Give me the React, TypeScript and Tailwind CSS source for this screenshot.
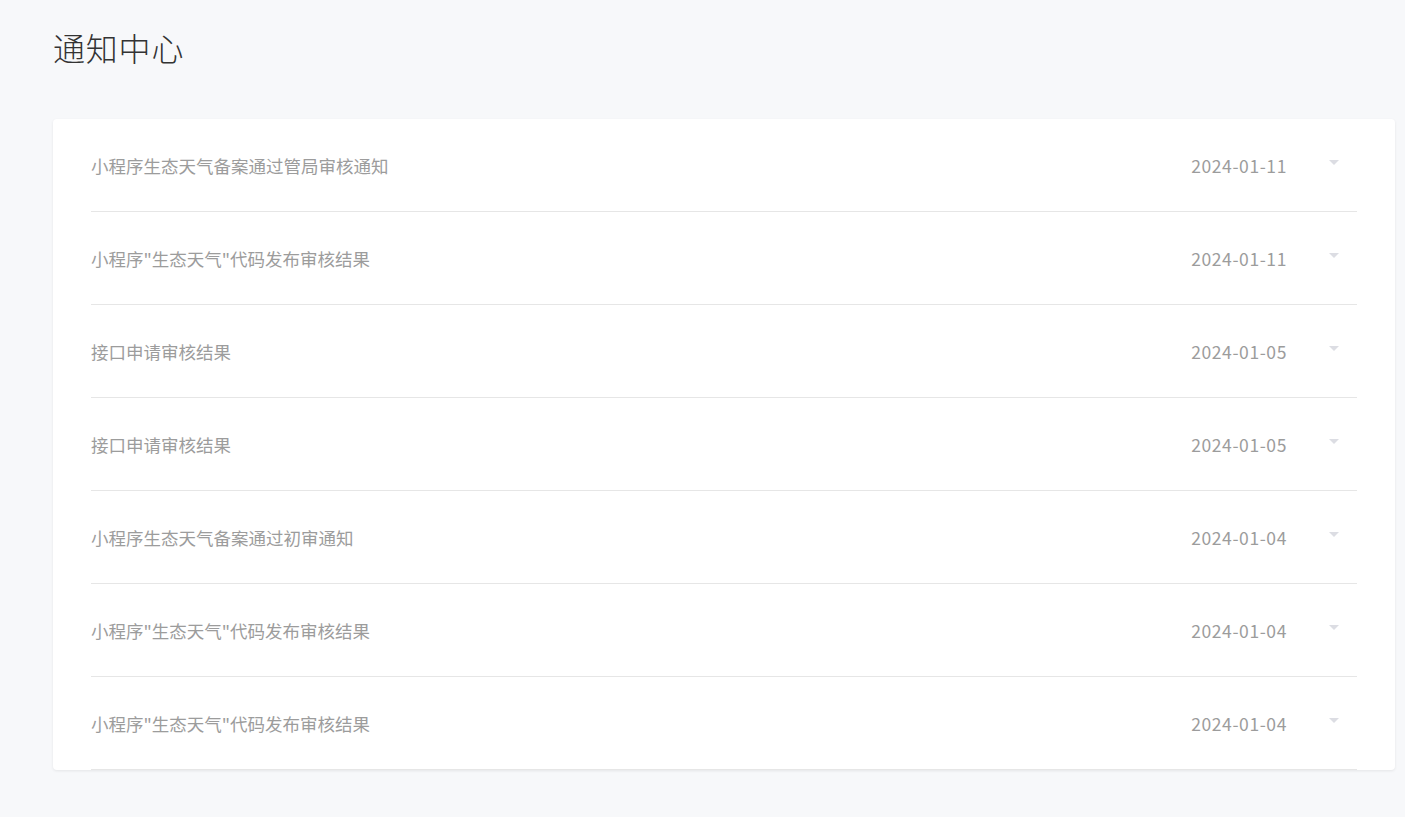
import React from "react";

const items = [
  { title: "小程序生态天气备案通过管局审核通知", date: "2024-01-11" },
  { title: "小程序\"生态天气\"代码发布审核结果", date: "2024-01-11" },
  { title: "接口申请审核结果", date: "2024-01-05" },
  { title: "接口申请审核结果", date: "2024-01-05" },
  { title: "小程序生态天气备案通过初审通知", date: "2024-01-04" },
  { title: "小程序\"生态天气\"代码发布审核结果", date: "2024-01-04" },
  { title: "小程序\"生态天气\"代码发布审核结果", date: "2024-01-04" },
];

export default function App() {
  return (
    <div
      className="min-h-screen bg-[#f7f8fa] pl-[53px] pr-[10px] pt-[27px] pb-[40px]"
      style={{ fontFamily: '"Microsoft YaHei", "Noto Sans CJK SC", "Noto Sans", sans-serif' }}
    >
      <h1 className="text-[32px] leading-[40px] text-[#333] font-light tracking-[0.8px]">通知中心</h1>
      <div className="mt-[52px] bg-white rounded-[4px] shadow-[0_1px_3px_rgba(0,0,0,0.08)] px-[38px] overflow-hidden">
        {items.map((it, i) => (
          <div
            key={i}
            className="h-[93px] pt-[2px] flex items-center border-b border-[#e6e6e6] text-[17.5px] text-[#9c9c9c]"
          >
            <div className="flex-1 truncate">{it.title}</div>
            <div className="whitespace-nowrap tracking-[0.6px]">{it.date}</div>
            <div className="w-[70px] flex justify-end pr-[18px] -mt-[8px]">
              <svg width="10" height="5" viewBox="0 0 10 5">
                <path d="M0 0 L10 0 L5 5 Z" fill="#dcdde3" />
              </svg>
            </div>
          </div>
        ))}
      </div>
    </div>
  );
}
